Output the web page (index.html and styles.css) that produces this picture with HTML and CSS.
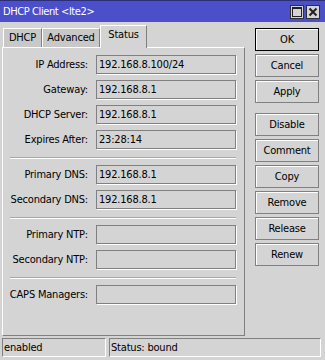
FILE: index.html
```html
<!DOCTYPE html>
<html lang="en">
<head>
    <meta charset="UTF-8">
    <title>DHCP Client &lt;lte2&gt;</title>
    <link rel="stylesheet" href="styles.css">
</head>
<body>
    <div class="window">
        <div class="titlebar">
            <span class="title">DHCP Client &lt;lte2&gt;</span>
            <div class="tb-btns">
                <span class="tb-btn">
                    <svg width="10" height="10" viewBox="0 0 10 10"><rect x="0.5" y="0.5" width="9" height="9" fill="none" stroke="#222" stroke-width="1"/><rect x="0" y="0" width="10" height="2" fill="#222"/></svg>
                </span>
                <span class="tb-btn">
                    <svg width="10" height="10" viewBox="0 0 10 10"><path d="M1.5 1.5 L8.5 8.5 M8.5 1.5 L1.5 8.5" stroke="#222" stroke-width="2"/></svg>
                </span>
            </div>
        </div>

        <div class="main">
            <div class="left">
                <div class="tabs">
                    <div class="tab tab-dhcp">DHCP</div>
                    <div class="tab tab-adv">Advanced</div>
                    <div class="tab tab-status active">Status</div>
                </div>
                <div class="panel">
                    <div class="group">
                        <div class="row"><span class="label">IP Address:</span><span class="value">192.168.8.100/24</span></div>
                        <div class="row"><span class="label">Gateway:</span><span class="value">192.168.8.1</span></div>
                        <div class="row"><span class="label">DHCP Server:</span><span class="value">192.168.8.1</span></div>
                        <div class="row"><span class="label">Expires After:</span><span class="value">23:28:14</span></div>
                    </div>
                    <div class="sep"></div>
                    <div class="group">
                        <div class="row"><span class="label">Primary DNS:</span><span class="value">192.168.8.1</span></div>
                        <div class="row"><span class="label">Secondary DNS:</span><span class="value">192.168.8.1</span></div>
                    </div>
                    <div class="sep"></div>
                    <div class="group">
                        <div class="row"><span class="label">Primary NTP:</span><span class="value"></span></div>
                        <div class="row"><span class="label">Secondary NTP:</span><span class="value"></span></div>
                    </div>
                    <div class="sep"></div>
                    <div class="group">
                        <div class="row"><span class="label">CAPS Managers:</span><span class="value"></span></div>
                    </div>
                </div>
            </div>

            <div class="buttons">
                <div class="btn default">OK</div>
                <div class="btn">Cancel</div>
                <div class="btn">Apply</div>
                <div class="btn spaced">Disable</div>
                <div class="btn">Comment</div>
                <div class="btn">Copy</div>
                <div class="btn">Remove</div>
                <div class="btn">Release</div>
                <div class="btn">Renew</div>
            </div>
        </div>

        <div class="statusbar">
            <div class="field f1">enabled</div>
            <div class="field f2">Status: bound</div>
        </div>
    </div>
</body>
</html>
```

FILE: styles.css
```css
* { margin: 0; padding: 0; box-sizing: border-box; }
body { font-family: "DejaVu Sans Condensed", "DejaVu Sans", sans-serif; font-size: 11px; letter-spacing: -0.2px; color: #000; background: #d4d4d4; }

.window { width: 325px; height: 360px; display: flex; flex-direction: column; background: #d4d4d4; }

.titlebar {
    height: 22px;
    background: #4b4fc9;
    border-top: 1px solid #2c2e78;
    color: #fff;
    display: flex;
    align-items: center;
    justify-content: space-between;
    padding: 0 5px 0 3px;
}
.title { letter-spacing: -0.4px; }
.tb-btns { display: flex; gap: 2px; }
.tb-btn {
    width: 14px; height: 14px;
    border: 1px solid #303030;
    background: #d4d4d4;
    display: flex; align-items: center; justify-content: center;
}

.main { flex: 1; display: flex; }
.left { margin-left: 2px; width: 243px; display: flex; flex-direction: column; }

.tabs { height: 25px; display: flex; align-items: flex-end; padding-left: 1px; }
.tab {
    height: 19px;
    line-height: 18px;
    text-align: center;
    background: #c8c8c8;
    border-top: 1px solid #fff;
    border-left: 1px solid #fff;
    border-right: 1px solid #808080;
}
.tab-dhcp { width: 39px; }
.tab-adv { width: 58px; }
.tab-status { width: 47px; }
.tab.active {
    height: 23px;
    line-height: 17px;
    margin-bottom: -1px;
    background: #d4d4d4;
    position: relative;
    z-index: 1;
}

.panel {
    height: 289px;
    border-top: 1px solid #fff;
    border-left: 1px solid #fff;
    border-right: 1px solid #808080;
    border-bottom: 1px solid #808080;
    padding-top: 7px;
}
.group { display: flex; flex-direction: column; gap: 6px; }
.row { display: flex; align-items: center; height: 19px; }
.label { width: 85px; text-align: right; margin-right: 8px; }
.value {
    width: 140px; height: 19px;
    border: 1px solid #808080;
    box-shadow: 1px 1px 0 #fff;
    padding-left: 2px;
    line-height: 17px;
}
.sep {
    width: 226px;
    margin: 8px 0 6px 7px;
    border-top: 1px solid #a8a8a8;
    border-bottom: 1px solid #fff;
}

.buttons { margin-left: 10px; padding-top: 6px; display: flex; flex-direction: column; gap: 3px; }
.btn {
    width: 64px; height: 23px;
    border: 1px solid #808080;
    box-shadow: inset 1px 1px 0 #fff;
    text-align: center;
    line-height: 21px;
}
.btn.default { border-color: #000; }
.btn.spaced { margin-top: 7px; }

.statusbar { height: 19px; margin-bottom: 3px; padding-left: 2px; display: flex; gap: 3px; }
.field {
    height: 19px;
    border-top: 1px solid #808080;
    border-left: 1px solid #808080;
    border-bottom: 1px solid #fff;
    border-right: 1px solid #fff;
    padding-left: 1px;
    line-height: 17px;
}
.f1 { width: 104px; }
.f2 { width: 212px; }
```
